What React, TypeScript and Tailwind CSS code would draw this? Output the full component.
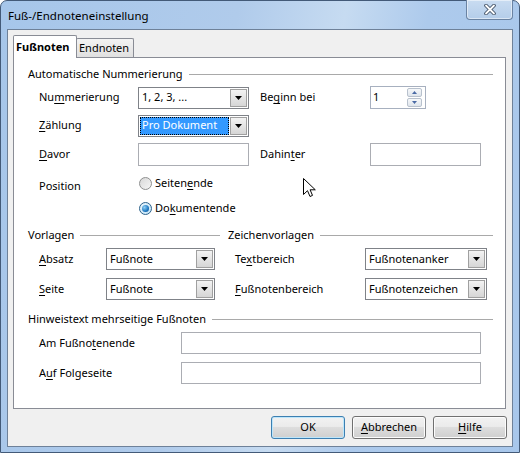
import React from 'react';
import clsx from 'clsx';

// Win7-style "Fuß-/Endnoteneinstellung" dialog (LibreOffice)

function Mn({ text, u }: { text: string; u?: number }) {
  if (u === undefined) return <>{text}</>;
  return (
    <>
      {text.slice(0, u)}
      <span className="underline decoration-1 underline-offset-2">{text[u]}</span>
      {text.slice(u + 1)}
    </>
  );
}

const Arrow = () => (
  <svg width="7" height="4" viewBox="0 0 7 4">
    <path d="M0 0h7L3.5 4z" fill="#000" />
  </svg>
);

function Dropdown({ value, w, selected }: { value: string; w: string; selected?: boolean }) {
  return (
    <div className={clsx('flex h-[22px] border border-[#7f8288] bg-white p-px', w)}>
      <div className="flex min-w-0 flex-1 items-center">
        <span
          className={clsx(
            'flex h-full flex-1 items-center pl-[2px] whitespace-nowrap',
            selected && 'bg-[#3399ff] text-white outline-1 -outline-offset-1 outline-dotted outline-[#000]',
          )}
        >
          {value}
        </span>
      </div>
      <div className="ml-px flex w-[17px] items-center justify-center border border-[#a0a0a0] bg-linear-to-b from-[#f3f3f3] to-[#d6d6d6]">
        <Arrow />
      </div>
    </div>
  );
}

function TextField({ w }: { w: string }) {
  return <div className={clsx('h-[23px] border border-[#abadb3] bg-white', w)} />;
}

function SpinField({ value }: { value: string }) {
  return (
    <div className="flex h-[23px] w-[56px] items-center border border-[#a7b0bf] bg-white">
      <span className="flex-1 pl-[2px] text-[#000]">{value}</span>
      <div className="mr-[3px] flex h-[19px] w-[15px] flex-col gap-px">
        <div className="flex flex-1 items-center justify-center rounded-[2px] border border-[#b8c1cd] bg-linear-to-b from-[#f6f8fa] to-[#dfe5ec]">
          <svg width="5" height="3" viewBox="0 0 5 3"><path d="M0 3h5L2.5 0z" fill="#4a6aa5" /></svg>
        </div>
        <div className="flex flex-1 items-center justify-center rounded-[2px] border border-[#b8c1cd] bg-linear-to-b from-[#f6f8fa] to-[#dfe5ec]">
          <svg width="5" height="3" viewBox="0 0 5 3"><path d="M0 0h5L2.5 3z" fill="#4a6aa5" /></svg>
        </div>
      </div>
    </div>
  );
}

function Radio({ checked }: { checked?: boolean }) {
  return (
    <span
      className={clsx(
        'flex h-[13px] w-[13px] items-center justify-center rounded-full border',
        checked
          ? 'border-[#2c628b] bg-linear-to-br from-[#e9f5fd] to-[#c4e4f6]'
          : 'border-[#8e8f8f] bg-linear-to-br from-[#d8d8d8] to-[#f6f6f6]',
      )}
    >
      {checked && (
        <span className="h-[7px] w-[7px] rounded-full bg-[radial-gradient(circle_at_35%_35%,#8fd0f5,#1e78c2_60%,#0d4f8c)]" />
      )}
    </span>
  );
}

function SectionHead({ title }: { title: string }) {
  return (
    <div className="flex h-[16px] items-center">
      <span className="whitespace-nowrap">{title}</span>
      <div className="ml-[6px] h-px flex-1 bg-[#a9a9a9]" />
    </div>
  );
}

function DlgButton({ children, primary }: { children: React.ReactNode; primary?: boolean }) {
  return (
    <div
      className={clsx(
        'flex h-[23px] w-[74px] items-center justify-center rounded-[3px] border bg-[linear-gradient(#f2f2f2,#ebebeb_45%,#dddddd_50%,#cfcfcf)]',
        primary ? 'border-[#3c7fb1] shadow-[inset_0_0_0_1px_#bde6fb]' : 'border-[#707070] shadow-[inset_0_0_0_1px_#fcfcfc]',
      )}
    >
      {children}
    </div>
  );
}

export default function App() {
  return (
    <div className="relative flex h-[453px] w-[520px] flex-col rounded-t-[7px] border border-[#435a78] bg-[linear-gradient(100deg,#a6c6ea_0%,#b0cbeb_40%,#c6dbf1_58%,#adcaec_72%,#a8c7eb_100%)] px-[6px] pb-[5px] font-['Noto_Sans',sans-serif] text-[11px] text-[#000]">
      {/* Title bar */}
      <div className="flex h-[28px] items-start justify-between">
        <span className="mt-[6px] pl-px text-[11.5px] text-[#000]">Fuß-/Endnoteneinstellung</span>
        <div className="-mt-px flex h-[20px] w-[47px] items-center justify-center rounded-b-[4px] border border-t-0 border-[#6a83a3] bg-linear-to-b from-[#c9dcf1] to-[#b4cdea] shadow-[inset_0_0_0_1px_rgba(255,255,255,0.5)]">
          <svg width="12" height="11" viewBox="0 0 12 11">
            <path d="M2 1.5l8 8M10 1.5l-8 8" stroke="#3d4d62" strokeWidth="3.6" strokeLinecap="round" />
            <path d="M2 1.5l8 8M10 1.5l-8 8" stroke="#fff" strokeWidth="1.8" strokeLinecap="round" />
          </svg>
        </div>
      </div>

      {/* Client area */}
      <div className="flex flex-1 flex-col border border-[#6e8199] bg-[#f0f0f0]">
        {/* Tabs */}
        <div className="mt-[5px] ml-[5px] flex items-end">
          <div className="relative z-10 -mb-px flex h-[23px] w-[64px] items-center rounded-t-[2px] border border-b-0 border-[#898c95] bg-white pl-[2px] font-bold">
            Fußnoten
          </div>
          <div className="-ml-px flex h-[19px] w-[58px] items-center rounded-t-[2px] border border-b-0 border-[#898c95] bg-linear-to-b from-[#f3f3f3] to-[#e0e0e0] pl-[2px]">
            Endnoten
          </div>
        </div>

        {/* Tab page */}
        <div className="ml-[5px] flex h-[352px] w-[493px] flex-col border border-[#898c95] bg-white pt-[8px] pr-[12px] pl-[14px]">
          <SectionHead title="Automatische Nummerierung" />

          <div className="mt-[4px] flex h-[23px] items-center pl-[11px]">
            <span className="w-[99px]"><Mn text="Nummerierung" u={2} /></span>
            <Dropdown value="1, 2, 3, ..." w="w-[111px]" />
            <span className="ml-[11px] w-[110px]"><Mn text="Beginn bei" u={2} /></span>
            <SpinField value="1" />
          </div>

          <div className="mt-[5px] flex h-[23px] items-center pl-[11px]">
            <span className="w-[99px]"><Mn text="Zählung" u={0} /></span>
            <Dropdown value="Pro Dokument" w="w-[111px]" selected />
          </div>

          <div className="mt-[6px] flex h-[23px] items-center pl-[11px]">
            <span className="w-[99px]"><Mn text="Davor" u={0} /></span>
            <TextField w="w-[111px]" />
            <span className="ml-[11px] w-[110px]"><Mn text="Dahinter" u={5} /></span>
            <TextField w="w-[111px]" />
          </div>

          <div className="mt-[7px] flex pl-[11px]">
            <span className="mt-[3px] flex h-[20px] w-[99px] items-center">Position</span>
            <div className="flex flex-col gap-[5px]">
              <div className="flex h-[20px] items-center gap-[3px] pl-px">
                <Radio />
                <span><Mn text="Seitenende" u={6} /></span>
              </div>
              <div className="flex h-[20px] items-center gap-[3px] pl-px">
                <Radio checked />
                <span><Mn text="Dokumentende" u={2} /></span>
              </div>
            </div>
          </div>

          {/* Vorlagen / Zeichenvorlagen */}
          <div className="mt-[9px] flex">
            <div className="w-[192px]">
              <SectionHead title="Vorlagen" />
              <div className="mt-[5px] flex h-[22px] items-center pl-[11px]">
                <span className="w-[67px]"><Mn text="Absatz" u={0} /></span>
                <Dropdown value="Fußnote" w="w-[109px]" />
              </div>
              <div className="mt-[8px] flex h-[22px] items-center pl-[11px]">
                <span className="w-[67px]"><Mn text="Seite" u={0} /></span>
                <Dropdown value="Fußnote" w="w-[109px]" />
              </div>
            </div>
            <div className="ml-[8px] flex-1">
              <SectionHead title="Zeichenvorlagen" />
              <div className="mt-[5px] flex h-[22px] items-center pl-[7px]">
                <span className="w-[130px]"><Mn text="Textbereich" u={2} /></span>
                <Dropdown value="Fußnotenanker" w="w-[122px]" />
              </div>
              <div className="mt-[8px] flex h-[22px] items-center pl-[7px]">
                <span className="w-[130px]"><Mn text="Fußnotenbereich" u={0} /></span>
                <Dropdown value="Fußnotenzeichen" w="w-[122px]" />
              </div>
            </div>
          </div>

          <div className="mt-[11px]">
            <SectionHead title="Hinweistext mehrseitige Fußnoten" />
          </div>
          <div className="mt-[5px] flex h-[22px] items-center pl-[11px]">
            <span className="w-[142px]"><Mn text="Am Fußnotenende" u={8} /></span>
            <div className="h-[22px] w-[300px] border border-[#abadb3] bg-white" />
          </div>
          <div className="mt-[8px] flex h-[22px] items-center pl-[11px]">
            <span className="w-[142px]"><Mn text="Auf Folgeseite" u={1} /></span>
            <div className="h-[22px] w-[300px] border border-[#abadb3] bg-white" />
          </div>
        </div>

        {/* Buttons */}
        <div className="mt-[7px] flex justify-end gap-[7px] pr-[5px]">
          <DlgButton primary>OK</DlgButton>
          <DlgButton><Mn text="Abbrechen" u={0} /></DlgButton>
          <DlgButton><Mn text="Hilfe" u={0} /></DlgButton>
        </div>
      </div>

      {/* Mouse pointer */}
      <svg className="absolute top-[177px] left-[302px]" width="13" height="20" viewBox="0 0 13 20">
        <path d="M0.5 0.5V16.5L4.5 12.7L7 18.5L9.5 17.4L7.1 11.8H12.3Z" fill="#fff" stroke="#000" strokeWidth="1" strokeLinejoin="round" />
      </svg>
    </div>
  );
}
